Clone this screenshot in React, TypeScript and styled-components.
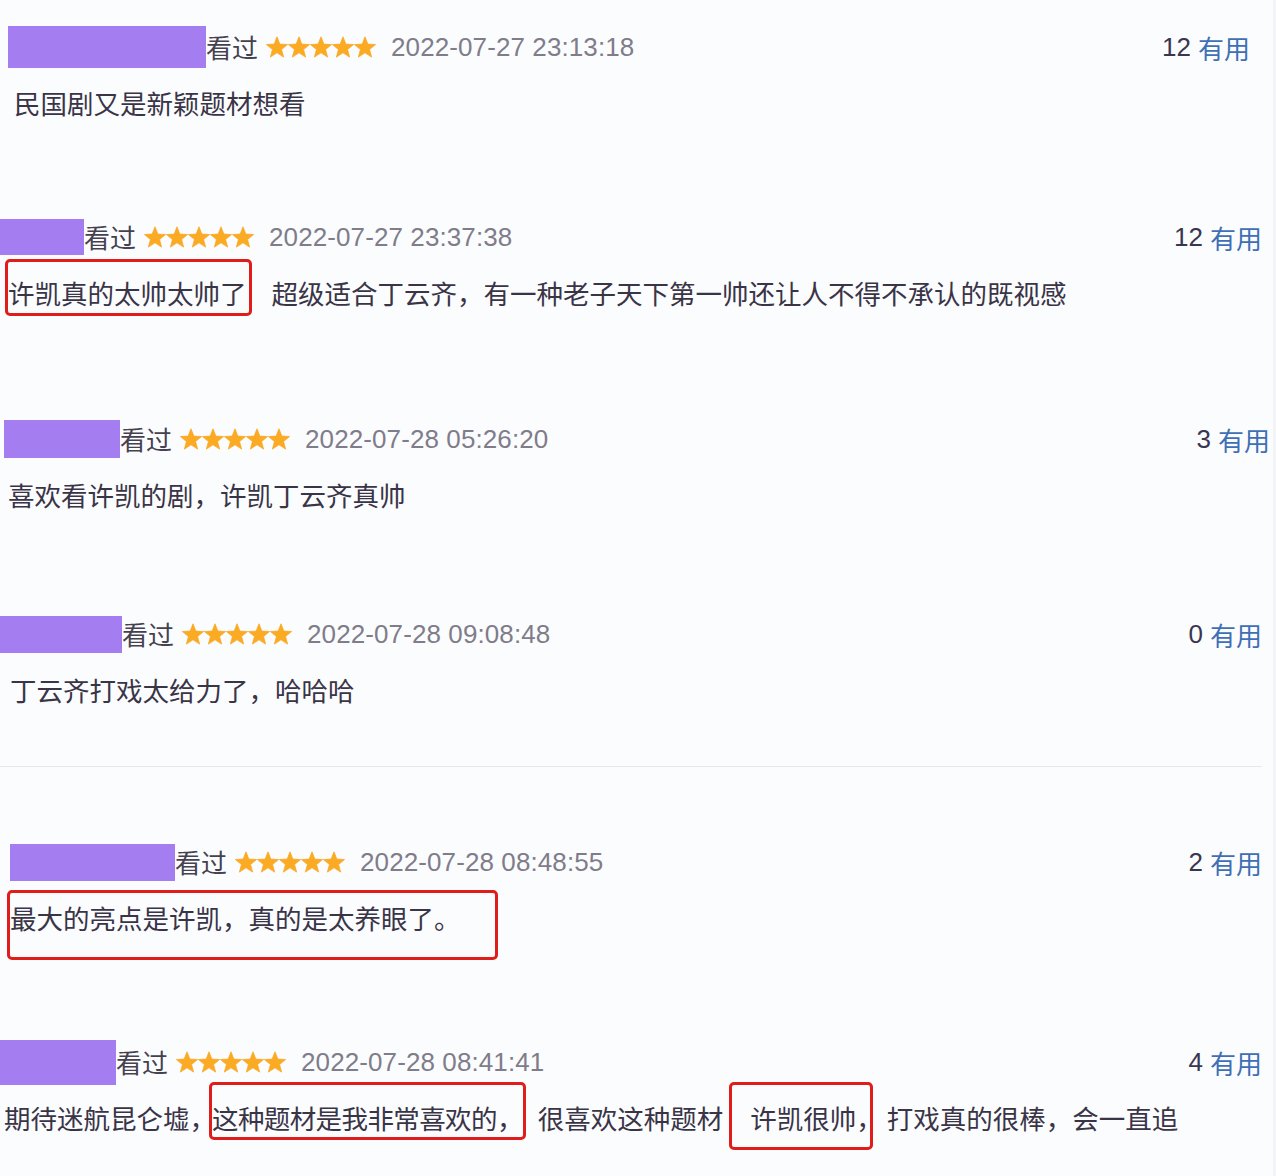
import React from "react";
import styled, { createGlobalStyle } from "styled-components";

const GlobalStyle = createGlobalStyle`
  html, body {
    margin: 0;
    padding: 0;
    background: #fbfcfe;
  }
  body {
    font-family: "Noto Sans CJK SC", "Noto Sans", sans-serif;
  }
`;

const Page = styled.div`
  width: 1276px;
  min-height: 1176px;
  box-sizing: border-box;
  padding-top: 25px;
  display: flex;
  flex-direction: column;
  overflow: hidden;
  box-shadow: inset -3px 0 0 #f2f4f8;
`;

const Entry = styled.section<{ $h?: number }>`
  height: ${(p) => (p.$h ? `${p.$h}px` : "auto")};
  display: flex;
  flex-direction: column;
  flex-shrink: 0;
`;

const Header = styled.div<{ $left: number; $right: number }>`
  display: flex;
  align-items: center;
  height: 44px;
  padding: 0 ${(p) => p.$right}px 0 ${(p) => p.$left}px;
  white-space: nowrap;
`;

// 用户名被涂掉的紫色块
const NameMask = styled.span<{ $w: number; $h: number }>`
  display: block;
  width: ${(p) => p.$w}px;
  height: ${(p) => p.$h}px;
  background: #a47df0;
`;

const Watched = styled.span`
  font-size: 26px;
  line-height: 44px;
  color: #45414f;
`;

const Stars = styled.span`
  display: flex;
  margin-left: 8px;
`;

const Time = styled.span`
  margin-left: 15px;
  font-family: "Liberation Sans", Arial, sans-serif;
  font-size: 26px;
  color: #807c8a;
  letter-spacing: 0.1px;
`;

const Votes = styled.span`
  margin-left: auto;
  font-size: 26px;
  color: #3a3650;
  display: flex;
  align-items: center;
  gap: 7px;
`;

const VoteNum = styled.span`
  font-family: "Liberation Sans", Arial, sans-serif;
`;

const VoteLabel = styled.span`
  color: #3f6fb5;
`;

const Comment = styled.div<{ $left: number }>`
  display: flex;
  align-items: flex-start;
  margin-top: 16px;
  height: 36px;
  padding-left: ${(p) => p.$left}px;
  font-size: 26.5px;
  line-height: 36px;
  color: #3a3447;
  white-space: nowrap;
`;

const Mark = styled.span<{
  $pt: number;
  $pb: number;
  $pl?: number;
  $pr?: number;
  $ml?: number;
  $mr?: number;
  $ls?: number;
}>`
  display: inline-block;
  border: 3px solid #e01d1a;
  border-radius: 5px;
  padding: ${(p) => p.$pt}px ${(p) => p.$pr ?? 0}px ${(p) => p.$pb}px
    ${(p) => p.$pl ?? 0}px;
  margin: ${(p) => -(3 + p.$pt)}px ${(p) => p.$mr ?? 0}px
    ${(p) => -(3 + p.$pb)}px ${(p) => p.$ml ?? 0}px;
  letter-spacing: ${(p) => p.$ls ?? 0}px;
`;

const Punct = styled.span`
  margin-right: -13px;
`;

const Divider = styled.hr`
  margin: 0 14px 73px 0;
  border: none;
  height: 1px;
  background: #e4e9ef;
  flex-shrink: 0;
`;

const StarIcon = () => (
  <svg width="22" height="22" viewBox="0 0 22 22">
    <path
      d="M11 0.8L13.82 8.12L21.6 8.5L15.57 13.48L17.6 21.1L11 16.8L4.4 21.1L6.43 13.48L0.4 8.5L8.18 8.12Z"
      fill="#fbaa24"
      stroke="#fbaa24"
      strokeWidth="0.8"
      strokeLinejoin="round"
    />
  </svg>
);

type HeadProps = {
  left: number;
  right: number;
  maskW: number;
  maskH: number;
  time: string;
  votes: number;
};

const Head: React.FC<HeadProps> = ({ left, right, maskW, maskH, time, votes }) => (
  <Header $left={left} $right={right}>
    <NameMask $w={maskW} $h={maskH} />
    <Watched>看过</Watched>
    <Stars>
      {[0, 1, 2, 3, 4].map((i) => (
        <StarIcon key={i} />
      ))}
    </Stars>
    <Time>{time}</Time>
    <Votes>
      <VoteNum>{votes}</VoteNum>
      <VoteLabel>有用</VoteLabel>
    </Votes>
  </Header>
);

const App: React.FC = () => {
  return (
    <>
      <GlobalStyle />
      <Page>
        <Entry $h={190}>
          <Head left={8} right={26} maskW={198} maskH={42} time="2022-07-27 23:13:18" votes={12} />
          <Comment $left={14}>民国剧又是新颖题材想看</Comment>
        </Entry>

        <Entry $h={202}>
          <Head left={0} right={14} maskW={84} maskH={36} time="2022-07-27 23:37:38" votes={12} />
          <Comment $left={5}>
            <Mark $pt={13} $pb={2} $pr={2} $mr={20}>
              许凯真的太帅太帅了
            </Mark>
            超级适合丁云齐，有一种老子天下第一帅还让人不得不承认的既视感
          </Comment>
        </Entry>

        <Entry $h={195}>
          <Head left={4} right={6} maskW={116} maskH={38} time="2022-07-28 05:26:20" votes={3} />
          <Comment $left={8}>喜欢看许凯的剧，许凯丁云齐真帅</Comment>
        </Entry>

        <Entry $h={154}>
          <Head left={0} right={14} maskW={122} maskH={37} time="2022-07-28 09:08:48" votes={0} />
          <Comment $left={10}>丁云齐打戏太给力了，哈哈哈</Comment>
        </Entry>
        <Divider />

        <Entry $h={200}>
          <Head left={10} right={14} maskW={165} maskH={37} time="2022-07-28 08:48:55" votes={2} />
          <Comment $left={7}>
            <Mark $pt={7} $pb={21} $pr={34}>
              最大的亮点是许凯，真的是太养眼了。
            </Mark>
          </Comment>
        </Entry>

        <Entry>
          <Head left={0} right={14} maskW={116} maskH={45} time="2022-07-28 08:41:41" votes={4} />
          <Comment $left={4}>
            期待迷航昆仑墟，
            <Mark $pt={15} $pb={1} $ml={-7} $mr={12} $ls={-0.6}>
              这种题材是我非常喜欢的，
            </Mark>
            很喜欢这种题材
            <Mark $pt={15} $pb={11} $pl={18} $ml={6} $mr={14}>
              许凯很帅<Punct>，</Punct>
            </Mark>
            打戏真的很棒，会一直追
          </Comment>
        </Entry>
      </Page>
    </>
  );
};

export default App;
